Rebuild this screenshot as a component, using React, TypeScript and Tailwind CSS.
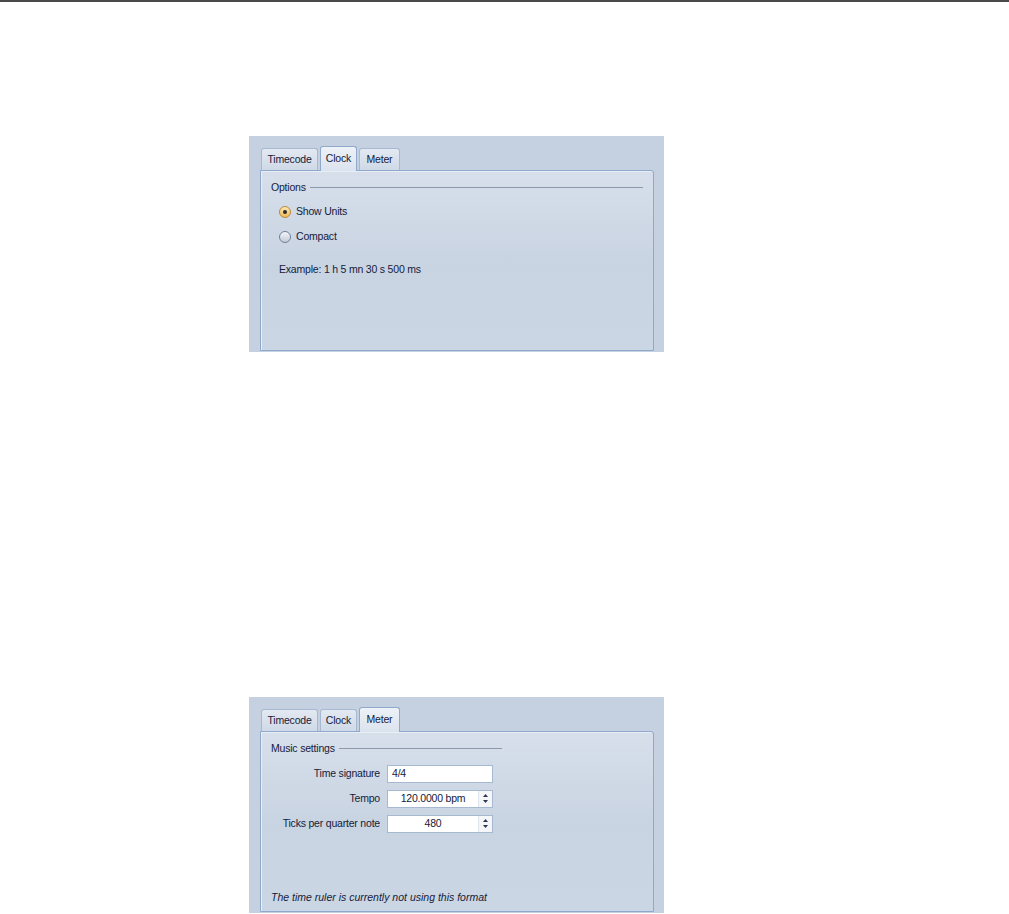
import React from 'react'

const font = { fontFamily: '"Liberation Sans", Arial, sans-serif', letterSpacing: '-0.2px' }

function Tab({ label, active, w }: { label: string; active?: boolean; w: string }) {
  return (
    <div
      className={`${w} flex items-center justify-center rounded-t-[3px] border border-b-0 text-[10.5px] text-[#15203a] ${
        active
          ? 'relative z-10 -mb-px h-[25px] border-[#8ea9cc] bg-gradient-to-b from-[#eef2f8] to-[#dbe3ee] pb-[1px]'
          : 'h-[22px] border-[#a7b9d1] bg-gradient-to-b from-[#e3e9f2] to-[#cfd9e7] pt-[1px]'
      }`}
    >
      {label}
    </div>
  )
}

function Tabs({ active }: { active: string }) {
  return (
    <div className="flex items-end gap-[2px] pl-px">
      <Tab label="Timecode" w="w-[57px]" active={active === 'Timecode'} />
      <Tab label="Clock" w="w-[37px]" active={active === 'Clock'} />
      <Tab label="Meter" w="w-[41px]" active={active === 'Meter'} />
    </div>
  )
}

function Panel({ active, children }: { active: string; children: React.ReactNode }) {
  return (
    <div className="flex h-[216px] w-[415px] flex-col bg-[#c5d1e1] pl-[11px] pr-[10px] pt-[10px] pb-px">
      <Tabs active={active} />
      <div className="flex flex-1 flex-col rounded-tr-[3px] border border-[#8ea9cc] bg-gradient-to-b from-[#d7dfeb] via-[#c9d4e2] to-[#cbd6e4] shadow-[inset_1px_1px_0_#e8eef6]">
        {children}
      </div>
    </div>
  )
}

function Radio({ checked, label }: { checked?: boolean; label: string }) {
  return (
    <div className="flex h-[13px] items-center gap-[5px] text-[10.5px] text-[#15203a]">
      <span
        className={`flex h-[12px] w-[12px] items-center justify-center rounded-full border ${
          checked
            ? 'border-[#b88a3a] bg-gradient-to-b from-[#fde7b4] to-[#f2b950]'
            : 'border-[#6f7f98] bg-gradient-to-b from-[#f4f6fa] to-[#c3cbd8]'
        }`}
      >
        {checked && <span className="h-[4px] w-[4px] rounded-full bg-[#2a2a2a]" />}
      </span>
      {label}
    </div>
  )
}

function Spin() {
  return (
    <div className="flex w-[14px] flex-col items-center justify-center gap-[3px] border-l border-[#dfe5ee] bg-[#f4f6fa]">
      <svg width="5" height="3" viewBox="0 0 5 3"><path d="M2.5 0L5 3H0z" fill="#2a3550" /></svg>
      <svg width="5" height="3" viewBox="0 0 5 3"><path d="M0 0h5L2.5 3z" fill="#2a3550" /></svg>
    </div>
  )
}

function Field({ label, value, spin }: { label: string; value: string; spin?: boolean }) {
  return (
    <div className="flex items-center gap-[7px]">
      <div className="w-[109px] text-right text-[10.5px] text-[#15203a]">{label}</div>
      <div className="flex h-[18px] w-[106px] border border-[#a7b9d1] bg-white text-[10.5px] text-[#15203a]">
        <div className={`flex flex-1 items-center ${spin ? 'justify-center' : 'pl-[4px]'}`}>{value}</div>
        {spin && <Spin />}
      </div>
    </div>
  )
}

export default function App() {
  return (
    <div className="h-[914px] w-full overflow-hidden bg-white" style={font}>
      <div className="h-[2px] bg-[#4a4a4a]" />
      <div className="pl-[249px] pt-[134px]">
        <Panel active="Clock">
          <div className="flex items-center gap-[4px] pl-[10px] pr-[10px] pt-[9px] text-[10.5px] text-[#15203a]">
            <span>Options</span>
            <div className="h-px flex-1 bg-[#8c99ab]" />
          </div>
          <div className="flex flex-col gap-[12px] pl-[18px] pt-[10px]">
            <Radio checked label="Show Units" />
            <Radio label="Compact" />
          </div>
          <div className="pl-[18px] pt-[18px] text-[10.5px] text-[#15203a]">Example: 1 h 5 mn 30 s 500 ms</div>
        </Panel>
        <div className="h-[345px]" />
        <Panel active="Meter">
          <div className="flex w-[241px] items-center gap-[4px] pl-[10px] pt-[9px] text-[10.5px] text-[#15203a]">
            <span>Music settings</span>
            <div className="h-px flex-1 bg-[#8c99ab]" />
          </div>
          <div className="flex flex-col gap-[7px] pl-[10px] pt-[8px]">
            <Field label="Time signature" value="4/4" />
            <Field label="Tempo" value="120.0000 bpm" spin />
            <Field label="Ticks per quarter note" value="480" spin />
          </div>
          <div className="mt-auto pb-[5px] pl-[10px] text-[10.5px] italic tracking-normal text-[#15203a]">
            The time ruler is currently not using this format
          </div>
        </Panel>
      </div>
    </div>
  )
}
